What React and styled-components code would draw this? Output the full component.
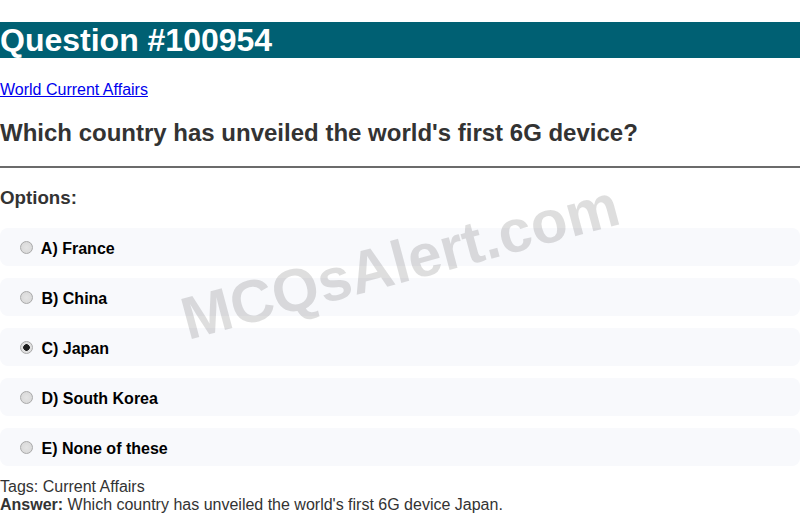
import React from "react"
import styled, { createGlobalStyle } from "styled-components"

const options = [
  { key: "A", label: "France" },
  { key: "B", label: "China" },
  { key: "C", label: "Japan", checked: true },
  { key: "D", label: "South Korea" },
  { key: "E", label: "None of these" },
]

const App = () => (
  <>
    <GlobalStyle />
    <Page>
      <Title>Question #100954</Title>
      <Category>
        <a href="#">World Current Affairs</a>
      </Category>
      <QuestionText>Which country has unveiled the world's first 6G device?</QuestionText>
      <Divider />
      <OptionsHeading>Options:</OptionsHeading>
      <OptionList>
        {options.map((o) => (
          <OptionRow key={o.key}>
            <Radio type="radio" name="answer" defaultChecked={o.checked} />
            {" "}
            {o.key}) {o.label}
          </OptionRow>
        ))}
      </OptionList>
      <Footer>
        <div>Tags: Current Affairs</div>
        <div>
          <strong>Answer:</strong> Which country has unveiled the world's first 6G device Japan.
        </div>
      </Footer>
      <Watermark>MCQsAlert.com</Watermark>
    </Page>
  </>
)

const GlobalStyle = createGlobalStyle`
  body {
    margin: 0;
    background: #fff;
    font-family: "Liberation Sans", Arial, sans-serif;
  }
`

const Page = styled.div`
  position: relative;
  min-height: 514px;
  overflow: hidden;
  color: #333;
  display: flow-root;
`

const Title = styled.h1`
  margin: 22px 0 23px;
  background: #006073;
  color: #fff;
  font-size: 32px;
  line-height: 36px;
  font-weight: bold;
`

const Category = styled.p`
  margin: 0;
  font-size: 16px;
  line-height: 18px;

  a {
    color: #0000ee;
  }
`

const QuestionText = styled.h2`
  margin: 20px 0 19px;
  font-size: 24px;
  line-height: 28px;
  color: #333;
`

const Divider = styled.hr`
  margin: 0;
  border: none;
  border-top: 2px solid #6b6b6b;
`

const OptionsHeading = styled.h3`
  margin: 19px 0 0;
  font-size: 18.72px;
  line-height: 22px;
  color: #333;
`

const OptionList = styled.div`
  display: flex;
  flex-direction: column;
  gap: 12px;
  margin-top: 19px;
`

const OptionRow = styled.label`
  display: block;
  padding: 12px 15px 8px;
  background: #f8f9fc;
  border-radius: 8px;
  font-size: 16px;
  line-height: 18px;
  font-weight: bold;
  color: #000;
`

const Radio = styled.input`
  appearance: none;
  width: 13px;
  height: 13px;
  margin: 0 4px 0 5px;
  vertical-align: 0;
  border: 1px solid #a9a9a9;
  border-radius: 50%;
  background: radial-gradient(circle, #e4e4e4 0%, #d6d6d6 100%);
  box-sizing: border-box;

  &:checked {
    background: radial-gradient(circle, #1e1e1e 0 3px, #e0e0e0 3.6px);
  }
`

const Footer = styled.div`
  margin-top: 12px;
  font-size: 16px;
  line-height: 18px;
  color: #333;
`

const Watermark = styled.div`
  position: absolute;
  left: 50%;
  top: 262px;
  transform: translate(-50%, -50%) rotate(-15deg);
  font-size: 60px;
  font-weight: bold;
  color: rgba(0, 0, 0, 0.13);
  white-space: nowrap;
  pointer-events: none;
`

export default App
